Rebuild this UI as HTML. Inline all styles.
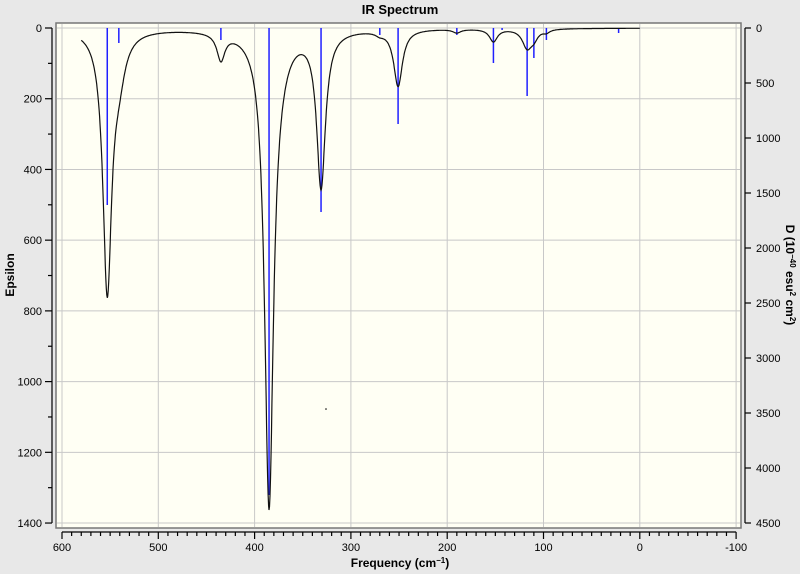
<!DOCTYPE html>
<html><head><meta charset="utf-8"><style>
html,body{margin:0;padding:0;background:#e8e8e8;}
svg{display:block;font-family:"Liberation Sans",sans-serif;}
</style></head><body>
<svg id="s" width="800" height="574" xmlns="http://www.w3.org/2000/svg">
<rect x="0" y="0" width="800" height="574" fill="#e8e8e8"/>
<rect x="56" y="23" width="685" height="505" fill="#fffff4" stroke="#777" stroke-width="1.5"/>
<g id="grid" stroke="#c8c8c8" stroke-width="1"></g>
<g id="sticks" stroke="#2020ff" stroke-width="1.5"></g>
<path id="curve" fill="none" stroke="#111" stroke-width="1.2"/>
<g id="axes" stroke="#000" stroke-width="1.2" fill="none"></g>
<g id="labels" font-size="11" fill="#000"></g>
<text x="400" y="14" font-size="13" font-weight="bold" text-anchor="middle">IR Spectrum</text>
<text x="400" y="567" font-size="12" font-weight="bold" text-anchor="middle">Frequency (cm<tspan dy="-4" font-size="8">−1</tspan><tspan dy="4">)</tspan></text>
<text transform="translate(14,275) rotate(-90)" font-size="12" font-weight="bold" text-anchor="middle">Epsilon</text>
<text transform="translate(786,275) rotate(90)" font-size="12" font-weight="bold" text-anchor="middle">D (10<tspan dy="-4" font-size="8">−40</tspan><tspan dy="4"> esu</tspan><tspan dy="-4" font-size="8">2</tspan><tspan dy="4"> cm</tspan><tspan dy="-4" font-size="8">2</tspan><tspan dy="4">)</tspan></text>
<circle cx="326" cy="409" r="0.8" fill="#000"/>
</svg>
<script>
var NS="http://www.w3.org/2000/svg";
function X(f){return 62+(600-f)*0.963;}
function Y(e){return 28+e*0.3536;}
function el(p,t,a){var e=document.createElementNS(NS,t);for(var k in a)e.setAttribute(k,a[k]);document.getElementById(p).appendChild(e);return e;}
for(var f=600;f>=-100;f-=100){el("grid","line",{x1:X(f),y1:24,x2:X(f),y2:527});}
for(var e=0;e<=1400;e+=200){el("grid","line",{x1:57,y1:Y(e),x2:740,y2:Y(e)});}
el("axes","line",{x1:52,y1:Y(0),x2:52,y2:Y(1400)});
el("axes","line",{x1:X(600),y1:532,x2:X(-100),y2:532});
el("axes","line",{x1:745,y1:Y(0),x2:745,y2:Y(1400)});
for(var e=0;e<=1400;e+=100){el("axes","line",{x1:e%200?48:45,y1:Y(e),x2:52,y2:Y(e)});}
for(var e=0;e<=1400;e+=200){var t=el("labels","text",{x:42,y:Y(e)+4,"text-anchor":"end"});t.textContent=e;}
for(var f=600;f>=-100;f-=10){el("axes","line",{x1:X(f),y1:532,x2:X(f),y2:f%100?536:539});}
for(var f=600;f>=-100;f-=100){var t=el("labels","text",{x:X(f),y:551,"text-anchor":"middle"});t.textContent=f<0?"-100":f;}
for(var d=0;d<=4500;d+=500){var yy=28+d*0.11;el("axes","line",{x1:745,y1:yy,x2:751,y2:yy});var t=el("labels","text",{x:756,y:yy+4});t.textContent=d;}
var st=[[553,205],[541,43],[435,40],[385,495],[331,212],[270,35],[251,124],[190,35],[152,63],[143,30],[117,96],[110,58],[97,40],[22,33]];
st.forEach(function(s){el("sticks","line",{x1:X(s[0]),y1:28,x2:X(s[0]),y2:s[1]});});
var pk=[[553,730,5.5],[541,100,8],[435,75,5],[385,1330,5.5],[375,45,12],[331,440,5.5],[251,160,5.5],[190,10,5],[152,36,5],[117,52,6],[110,22,5],[97,8,4],[270,8,5]];
var d="";
for(var f=580;f>=0;f-=0.5){var v=0;pk.forEach(function(p){var q=(f-p[0])/p[2];v+=p[1]/(1+q*q);});d+=(d?"L":"M")+X(f).toFixed(1)+","+Y(v).toFixed(1);}
document.getElementById("curve").setAttribute("d",d);
</script>
</body></html>
